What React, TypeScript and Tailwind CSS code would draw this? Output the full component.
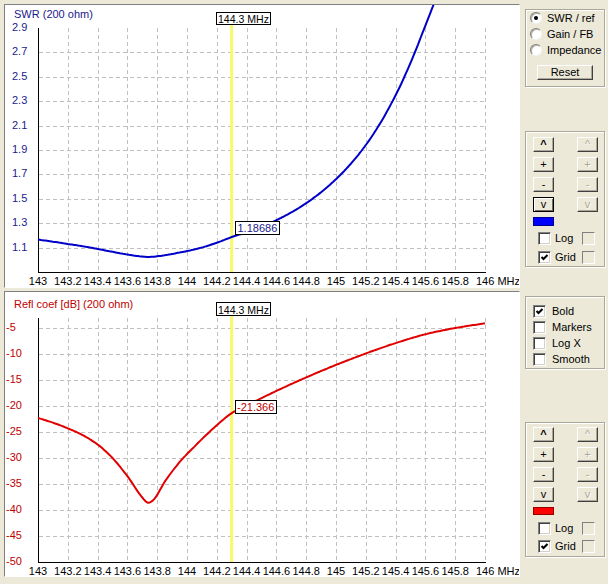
import clsx from "clsx";

type Pt = [number, number];

// reflection coefficient in dB, read off the lower plot
const REFL: Pt[] = [
  [143.0, -22.3], [143.1, -23.2], [143.2, -24.3], [143.3, -25.6], [143.4, -27.4],
  [143.5, -30.0], [143.6, -33.5], [143.7, -37.6], [143.74, -38.6], [143.78, -37.9],
  [143.85, -34.6], [143.95, -30.8], [144.05, -27.8], [144.15, -25.0], [144.3, -21.37],
  [144.4, -19.9], [144.6, -17.1], [144.8, -14.5], [145.0, -12.1], [145.2, -9.9],
  [145.4, -7.9], [145.6, -6.2], [145.8, -5.0], [146.0, -4.1],
];

const X0 = 38;
const PX_MHZ = 149;
const fx = (f: number) => X0 + (f - 143) * PX_MHZ;
const swrY = (s: number) => 272 - (s - 0.9) * 122;
const dbY = (d: number) => 562 - (d + 50) * 5.2;

// monotone cubic (Fritsch-Carlson)
function monotone(pts: Pt[]) {
  const n = pts.length;
  const xs = pts.map(p => p[0]);
  const ys = pts.map(p => p[1]);
  const d: number[] = [];
  for (let i = 0; i < n - 1; i++) d.push((ys[i + 1] - ys[i]) / (xs[i + 1] - xs[i]));
  const m: number[] = new Array(n).fill(0);
  m[0] = d[0];
  m[n - 1] = d[n - 2];
  for (let i = 1; i < n - 1; i++) m[i] = d[i - 1] * d[i] <= 0 ? 0 : (d[i - 1] + d[i]) / 2;
  for (let i = 0; i < n - 1; i++) {
    if (d[i] === 0) { m[i] = 0; m[i + 1] = 0; continue; }
    const a = m[i] / d[i];
    const b = m[i + 1] / d[i];
    const s = a * a + b * b;
    if (s > 9) {
      const t = 3 / Math.sqrt(s);
      m[i] = t * a * d[i];
      m[i + 1] = t * b * d[i];
    }
  }
  return (x: number) => {
    let i = 0;
    while (i < n - 2 && x > xs[i + 1]) i++;
    const h = xs[i + 1] - xs[i];
    const t = (x - xs[i]) / h;
    const t2 = t * t, t3 = t2 * t;
    return (2 * t3 - 3 * t2 + 1) * ys[i] + (t3 - 2 * t2 + t) * h * m[i]
      + (-2 * t3 + 3 * t2) * ys[i + 1] + (t3 - t2) * h * m[i + 1];
  };
}

const refl = monotone(REFL);
const samples: Pt[] = [];
for (let i = 0; i <= 300; i++) {
  const f = 143 + i * 0.01;
  samples.push([f, refl(f)]);
}
const toPath = (pts: Pt[]) =>
  pts.map(([x, y], i) => `${i ? "L" : "M"}${x.toFixed(1)} ${y.toFixed(1)}`).join(" ");

const reflPath = toPath(samples.map(([f, db]) => [fx(f), dbY(db)]));
const swrPath = toPath(samples.map(([f, db]) => {
  const g = Math.pow(10, db / 20);
  return [fx(f), swrY((1 + g) / (1 - g))];
}));

const X_LABELS = ["143", "143.2", "143.4", "143.6", "143.8", "144", "144.2", "144.4", "144.6",
  "144.8", "145", "145.2", "145.4", "145.6", "145.8"];
const GRID_X = Array.from({ length: 15 }, (_, i) => Math.round(fx(143.2 + i * 0.2)) + 0.5);
const MARK_X = fx(144.3);
const FONT = "Liberation Sans, Arial, sans-serif";

function XAxisLabels({ y }: { y: number }) {
  return (
    <g fill="#000">
      {X_LABELS.map((l, i) => (
        <text key={l} x={fx(143 + i * 0.2)} y={y} textAnchor="middle">{l}</text>
      ))}
      <text x={fx(146) - 9} y={y}>146 MHz</text>
    </g>
  );
}

function FreqTag({ y, h }: { y: number; h: number }) {
  return (
    <g>
      <rect x={216.5} y={y + 0.5} width={54} height={h} fill="#fff" stroke="#000" />
      <text x={218} y={y + h - 1.5} fill="#000" textLength={51} lengthAdjust="spacingAndGlyphs">144.3 MHz</text>
    </g>
  );
}

function SwrChart() {
  const ticks = [2.9, 2.7, 2.5, 2.3, 2.1, 1.9, 1.7, 1.5, 1.3, 1.1];
  return (
    <svg width={514} height={282} viewBox="5 5 514 282" className="block" fontFamily={FONT} fontSize={11}>
      <g stroke="#c0c0c0" strokeDasharray="4 3">
        {GRID_X.map(x => <line key={x} x1={x} x2={x} y1={28} y2={272} />)}
        {ticks.slice(1).map(t => {
          const y = Math.round(swrY(t)) + 0.5;
          return <line key={t} x1={39} x2={486} y1={y} y2={y} />;
        })}
      </g>
      <g stroke="#000">
        <line x1={38.5} x2={38.5} y1={28} y2={272} />
        <line x1={38} x2={486} y1={272.5} y2={272.5} />
      </g>
      <text x={14} y={18} fill="#1a1a8c">SWR (200 ohm)</text>
      <g fill="#1a1a8c">
        {ticks.map(t => <text key={t} x={12} y={Math.round(swrY(t)) + 3}>{t.toFixed(1)}</text>)}
      </g>
      <XAxisLabels y={285} />
      <line x1={MARK_X} x2={MARK_X} y1={24} y2={272} stroke="#f8f868" strokeWidth={3} />
      <path d={swrPath} fill="none" stroke="#0000c8" strokeWidth={2} strokeLinejoin="round" />
      <FreqTag y={12} h={12} />
      <rect x={235.5} y={221.5} width={44} height={13} fill="#fff" stroke="#000" />
      <text x={237.5} y={232} fill="#1a1a8c">1.18686</text>
    </svg>
  );
}

function ReflChart() {
  const ticks = [-5, -10, -15, -20, -25, -30, -35, -40, -45, -50];
  return (
    <svg width={514} height={284} viewBox="5 292 514 284" className="block" fontFamily={FONT} fontSize={11}>
      <g stroke="#c0c0c0" strokeDasharray="4 3">
        {GRID_X.map(x => <line key={x} x1={x} x2={x} y1={318} y2={562} />)}
        {ticks.slice(0, -1).map(t => {
          const y = Math.round(dbY(t)) + 0.5;
          return <line key={t} x1={39} x2={486} y1={y} y2={y} />;
        })}
      </g>
      <g stroke="#000">
        <line x1={38.5} x2={38.5} y1={318} y2={562} />
        <line x1={38} x2={486} y1={562.5} y2={562.5} />
      </g>
      <text x={14} y={308} fill="#c00000">Refl coef [dB] (200 ohm)</text>
      <g fill="#c00000">
        {ticks.map(t => <text key={t} x={6} y={Math.round(dbY(t)) + 3}>{t}</text>)}
      </g>
      <XAxisLabels y={575} />
      <line x1={MARK_X} x2={MARK_X} y1={316} y2={562} stroke="#f8f868" strokeWidth={3} />
      <path d={reflPath} fill="none" stroke="#e00000" strokeWidth={2} strokeLinejoin="round" />
      <FreqTag y={302} h={13} />
      <rect x={235.5} y={400.5} width={41} height={13} fill="#fff" stroke="#000" />
      <text x={237} y={411} fill="#c00000">-21.366</text>
    </svg>
  );
}

function GroupBox({ className, children }: { className?: string; children?: React.ReactNode }) {
  return (
    <div className={clsx("w-[80px] border border-[#aca899] shadow-[1px_1px_0_#fff,inset_1px_1px_0_#fff]", className)}>
      {children}
    </div>
  );
}

function Radio({ label, checked }: { label: string; checked?: boolean }) {
  return (
    <div className="h-[16px] flex items-center gap-[5px] pl-[4px]">
      <span className="w-[12px] h-[12px] rounded-full bg-white border border-t-[#808080] border-l-[#808080] border-r-[#f4f4f0] border-b-[#f4f4f0] shadow-[inset_1px_1px_0_#b0b0a8] flex items-center justify-center">
        {checked && <span className="w-[4px] h-[4px] rounded-full bg-black" />}
      </span>
      <span className="leading-[13px]">{label}</span>
    </div>
  );
}

function CheckBox({ checked, disabled }: { checked?: boolean; disabled?: boolean }) {
  return (
    <span
      className={clsx(
        "w-[13px] h-[13px] shrink-0 border border-t-[#808080] border-l-[#808080] border-r-white border-b-white flex items-center justify-center",
        disabled ? "bg-[#ece9d8]" : "bg-white shadow-[inset_1px_1px_0_#404040,inset_-1px_-1px_0_#d4d0c8]",
      )}
    >
      {checked && (
        <svg width="9" height="9" viewBox="0 0 9 9">
          <path d="M1.5 4 L3.5 6 L7.5 2" fill="none" stroke="#000" strokeWidth={2} />
        </svg>
      )}
    </span>
  );
}

function Btn({ label, disabled, focused }: { label: string; disabled?: boolean; focused?: boolean }) {
  return (
    <div
      className={clsx(
        "w-[21px] h-[15px] flex items-center justify-center bg-[#ece9d8] border text-[11px] leading-none",
        focused
          ? "border-black shadow-[inset_1px_1px_0_#fff,inset_-1px_-1px_0_#716f64]"
          : "border-t-white border-l-white border-r-[#404040] border-b-[#404040] shadow-[inset_-1px_-1px_0_#aca899]",
        disabled ? "text-[#aca899] [text-shadow:1px_1px_0_#fff]" : "text-black",
        label === "^" && !disabled && "font-bold",
      )}
    >
      {label}
    </div>
  );
}

const BTN_LABELS = ["^", "+", "-", "v"];

function ScaleGroup({ compact, bar }: { compact?: boolean; bar: string }) {
  return (
    <GroupBox className={compact ? "h-[135px] pt-[4px]" : "h-[136px] pt-[5px]"}>
      <div className="grid grid-cols-[21px_21px] gap-x-[23px] gap-y-[5px] pl-[7px]">
        {BTN_LABELS.map(l => [
          <Btn key={l + "a"} label={l} focused={!compact && l === "v"} />,
          <Btn key={l + "b"} label={l} disabled />,
        ])}
      </div>
      <div className={clsx("ml-[7px] mt-[5px] w-[21px] border border-black/40", compact ? "h-[8px]" : "h-[9px]", bar)} />
      <div className={clsx("flex flex-col", compact ? "mt-[7px] gap-[5px]" : "mt-[6px] gap-[6px]")}>
        {["Log", "Grid"].map(l => (
          <div key={l} className="flex items-center pl-[12px] h-[13px]">
            <CheckBox checked={l === "Grid"} />
            <span className="ml-[4px] w-[27px] leading-[13px]">{l}</span>
            <CheckBox disabled />
          </div>
        ))}
      </div>
    </GroupBox>
  );
}

export default function App() {
  return (
    <div className="w-[608px] h-[584px] bg-[#ece9d8] flex font-['Liberation_Sans',Arial,sans-serif] text-[11px] text-black overflow-hidden">
      {/* plots */}
      <div className="flex flex-col gap-[3px] pt-[4px] pl-[4px]">
        <div className="w-[516px] h-[284px] bg-white border border-t-[#808080] border-l-[#808080] border-r-white border-b-white overflow-hidden">
          <SwrChart />
        </div>
        <div className="w-[516px] h-[286px] bg-white border border-t-[#808080] border-l-[#808080] border-r-white border-b-white overflow-hidden">
          <ReflChart />
        </div>
      </div>

      {/* controls */}
      <div className="w-[88px] flex flex-col gap-[3px] pt-[4px]">
        <div className="h-[284px] flex flex-col justify-between pt-[5px] pb-[21px] pl-[5px]">
          <GroupBox className="h-[78px]">
            <Radio label="SWR / ref" checked />
            <Radio label="Gain / FB" />
            <Radio label="Impedance" />
            <div className="ml-[11px] mt-[7px] w-[56px] h-[15px] flex items-center justify-center border border-t-white border-l-white border-r-[#404040] border-b-[#404040] shadow-[inset_-1px_-1px_0_#aca899] leading-none">
              Reset
            </div>
          </GroupBox>
          <ScaleGroup bar="bg-[#0000ff]" />
        </div>
        <div className="h-[286px] flex flex-col justify-between pt-[5px] pb-[20px] pl-[5px]">
          <GroupBox className="h-[73px] pt-[6px]">
            {["Bold", "Markers", "Log X", "Smooth"].map(l => (
              <div key={l} className="h-[16px] flex items-center gap-[6px] pl-[7px]">
                <CheckBox checked={l === "Bold"} />
                <span className="leading-[13px]">{l}</span>
              </div>
            ))}
          </GroupBox>
          <ScaleGroup compact bar="bg-[#ff0000]" />
        </div>
      </div>
    </div>
  );
}
